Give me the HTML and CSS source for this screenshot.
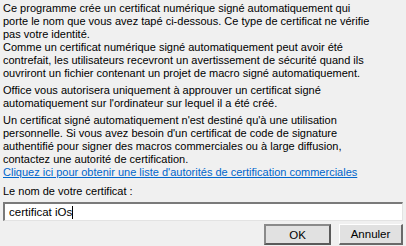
FILE: index.html
```html
<!DOCTYPE html>
<html lang="fr">
<head>
<meta charset="utf-8">
<link rel="stylesheet" href="styles.css">
</head>
<body>
<div class="dialog">
  <p class="para">Ce programme crée un certificat numérique signé automatiquement qui<br>porte le nom que vous avez tapé ci-dessous. Ce type de certificat ne vérifie<br>pas votre identité.<br>Comme un certificat numérique signé automatiquement peut avoir été<br>contrefait, les utilisateurs recevront un avertissement de sécurité quand ils<br>ouvriront un fichier contenant un projet de macro signé automatiquement.</p>
  <p class="para">Office vous autorisera uniquement à approuver un certificat signé<br>automatiquement sur l'ordinateur sur lequel il a été créé.</p>
  <p class="para">Un certificat signé automatiquement n'est destiné qu'à une utilisation<br>personnelle. Si vous avez besoin d'un certificat de code de signature<br>authentifié pour signer des macros commerciales ou à large diffusion,<br>contactez une autorité de certification.<br><a class="link" href="#">Cliquez ici pour obtenir une liste d'autorités de certification commerciales</a></p>
  <p class="para label">Le nom de votre certificat :</p>
  <div class="input"><span class="value">certificat iOs</span><span class="caret"></span></div>
  <div class="buttons">
    <button class="btn btn-default">OK</button>
    <button class="btn">Annuler</button>
  </div>
</div>
</body>
</html>
```
FILE: styles.css
```css
html, body {
  margin: 0;
  padding: 0;
  background: #f0f0f0;
}
.dialog {
  width: 406px;
  height: 246px;
  box-sizing: border-box;
  padding: 2px 3px 0 3px;
  font-family: "Liberation Sans", Arial, sans-serif;
  font-size: 11px;
  line-height: 13px;
  color: #000;
  display: flex;
  flex-direction: column;
}
.para {
  margin: 0 0 4px 0;
  white-space: nowrap;
}
.link {
  color: #0066cc;
  text-decoration: underline;
}
.label {
  margin-top: 2px;
  margin-bottom: 4px;
}
.input {
  height: 19px;
  flex: none;
  box-sizing: border-box;
  background: #fff;
  border-top: 2px solid #7a7a7a;
  border-left: 2px solid #7a7a7a;
  border-right: 1px solid #e3e3e3;
  border-bottom: 1px solid #e3e3e3;
  display: flex;
  align-items: center;
  padding-left: 4px;
  font-size: 11.5px;
}
.caret {
  display: inline-block;
  width: 1px;
  height: 13px;
  background: #000;
}
.buttons {
  display: flex;
  justify-content: flex-end;
  gap: 8px;
  margin-top: 3px;
}
.btn {
  height: 21px;
  width: 67px;
  box-sizing: border-box;
  background: #e1e1e1;
  border-top: 1px solid #fff;
  border-left: 1px solid #fff;
  border-right: 2px solid #696969;
  border-bottom: 2px solid #696969;
  font-family: "Liberation Sans", Arial, sans-serif;
  font-size: 11.5px;
  color: #000;
  padding: 0;
}
.btn + .btn {
  width: 64px;
}
.btn-default {
  border: 2px solid #5a5a5a;
  border-top-color: #8a8a8a;
  border-left-color: #8a8a8a;
}
```
